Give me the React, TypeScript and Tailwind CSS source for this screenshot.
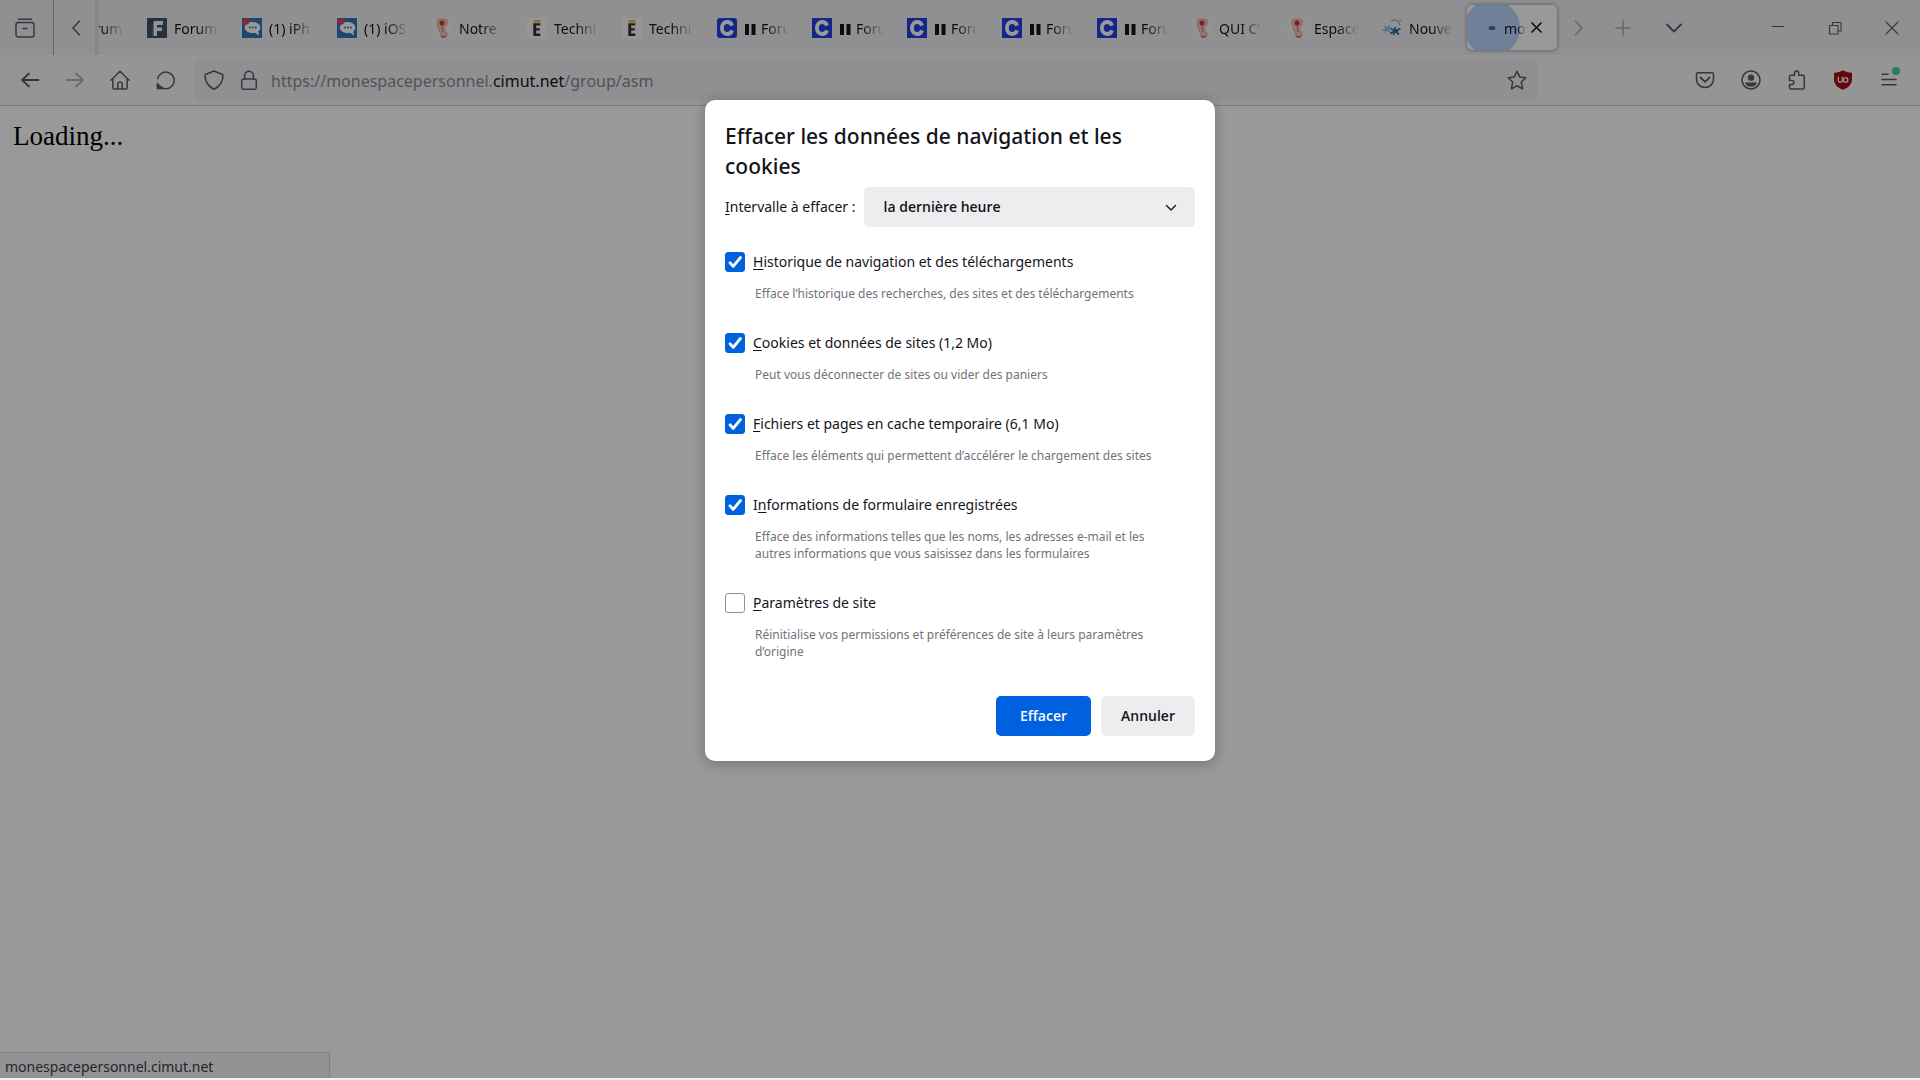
import { useState } from 'react'
import type { ReactNode } from 'react'
import clsx from 'clsx'

type Favicon = 'f' | 'chat' | 'red' | 'e' | 'cRound' | 'c' | 'stars'

const tabs: { icon: Favicon; title: string; paused?: boolean }[] = [
  { icon: 'f', title: 'Forum' },
  { icon: 'f', title: 'Forum' },
  { icon: 'chat', title: '(1) iPh' },
  { icon: 'chat', title: '(1) iOS' },
  { icon: 'red', title: 'Notre' },
  { icon: 'e', title: 'Techni' },
  { icon: 'e', title: 'Techni' },
  { icon: 'cRound', title: 'Foru', paused: true },
  { icon: 'c', title: 'Foru', paused: true },
  { icon: 'c', title: 'Foru', paused: true },
  { icon: 'c', title: 'Foru', paused: true },
  { icon: 'c', title: 'Foru', paused: true },
  { icon: 'red', title: 'QUI C’' },
  { icon: 'red', title: 'Espace' },
  { icon: 'stars', title: 'Nouve' },
]

const clearOptions = [
  {
    id: 'history',
    before: '',
    accessKey: 'H',
    after: 'istorique de navigation et des téléchargements',
    description: 'Efface l’historique des recherches, des sites et des téléchargements',
    checked: true,
  },
  {
    id: 'cookies',
    before: '',
    accessKey: 'C',
    after: 'ookies et données de sites (1,2 Mo)',
    description: 'Peut vous déconnecter de sites ou vider des paniers',
    checked: true,
  },
  {
    id: 'cache',
    before: '',
    accessKey: 'F',
    after: 'ichiers et pages en cache temporaire (6,1 Mo)',
    description: 'Efface les éléments qui permettent d’accélérer le chargement des sites',
    checked: true,
  },
  {
    id: 'forms',
    before: 'I',
    accessKey: 'n',
    after: 'formations de formulaire enregistrées',
    description:
      'Efface des informations telles que les noms, les adresses e-mail et les autres informations que vous saisissez dans les formulaires',
    checked: true,
  },
  {
    id: 'settings',
    before: '',
    accessKey: 'P',
    after: 'aramètres de site',
    description: 'Réinitialise vos permissions et préférences de site à leurs paramètres d’origine',
    checked: false,
  },
]

function Icon({ children, className, width = 1.5 }: { children: ReactNode; className?: string; width?: number }) {
  return (
    <svg
      viewBox="0 0 20 20"
      fill="none"
      stroke="currentColor"
      strokeWidth={width}
      strokeLinecap="round"
      strokeLinejoin="round"
      aria-hidden="true"
      className={clsx('shrink-0', className ?? 'size-5')}
    >
      {children}
    </svg>
  )
}

function TabFavicon({ icon }: { icon: Favicon }) {
  return (
    <svg viewBox="0 0 20 20" className="size-5 shrink-0" aria-hidden="true">
      {icon === 'f' && (
        <>
          <rect width="20" height="20" fill="#3f5366" />
          <path d="M6 3h10v4h-6v2.500h5v3.500h-5v5H5.500z" fill="#f4f6f8" />
          <path d="M2 3h4v15" fill="none" stroke="#31414f" strokeWidth="1" />
        </>
      )}
      {icon === 'chat' && (
        <>
          <rect width="20" height="20" fill="#3873bd" />
          <path
            d="M10.500 4C6 4 2.800 6.400 2.800 9.500s3.200 5.500 7.700 5.500c.9 0 1.700-.1 2.500-.3L17 17.500l-.6-4.200c1.200-1 1.900-2.300 1.900-3.800C18.300 6.400 15 4 10.500 4z"
            fill="#fff"
          />
          <g fill="#3873bd">
            <circle cx="8" cy="9.500" r="1" />
            <circle cx="10.900" cy="9.500" r="1" />
            <circle cx="13.800" cy="9.500" r="1" />
          </g>
          <circle cx="4" cy="3.600" r="3.200" fill="#fa3f3f" />
        </>
      )}
      {icon === 'red' && (
        <>
          <rect width="20" height="20" fill="#f6f3f2" />
          <path
            d="M6 1.300h7.500c1.500 0 1.900 1.500 1.700 3.700-.2 2.200-1.200 3.500-2.900 4.500l.2 3.500c2.200.3 3 2 2.600 3.500-.5 2-3.300 2.600-5.300 2-1.500-.4-1.500-1.800-.7-2.400-1.500-1.500-2.400-3.600-2.700-6.600C5 8 4.300 2.300 6 1.300z"
            fill="#f3c6be"
            stroke="#e08e85"
            strokeWidth=".7"
          />
          <path d="M10 7l.7 7" stroke="#dd7067" strokeWidth="1" />
          <circle cx="10" cy="5" r="2.500" fill="#c93630" />
          <path d="M9.500 18.500c1.800.7 3.600.5 4.800-.5" stroke="#e0564e" strokeWidth="1.400" fill="none" />
        </>
      )}
      {icon === 'e' && (
        <>
          <rect width="20" height="20" fill="#f9f8f6" />
          <rect x="6.800" y="2" width="6.700" height="2.500" fill="#f3b24a" />
          <path d="M6.300 5.300h7v2.300H9.200v2.600h3.600v2.200H9.200v3.100h4.100v2.400h-7z" fill="#33323a" />
        </>
      )}
      {(icon === 'c' || icon === 'cRound') && (
        <>
          <rect width="20" height="20" rx={icon === 'cRound' ? 3 : 0} fill="#2440e8" />
          <path
            d="M15 7.600C14.300 5.300 12.600 4 10.200 4 6.900 4 4.900 6.500 4.900 10s2 6 5.300 6c2.400 0 4.100-1.300 4.800-3.600"
            fill="none"
            stroke="#fff"
            strokeWidth="3.800"
          />
        </>
      )}
      {icon === 'stars' && (
        <>
          <path d="M9 3.200c4-2.500 8.500-1 9 4.300" fill="none" stroke="#5b96cc" strokeWidth="1" />
          <path d="M2.500 8l5.500 6M7.500 7.500l-4.500 7M.5 12.500l8-3" stroke="#7cc0e2" strokeWidth="1.500" />
          <path d="M8.500 10.500l7.500 3.500M13.500 9l-2 8M18.500 10.500L8 15.500M12.500 12.500l4.500 4" stroke="#276a9f" strokeWidth="1.700" />
          <circle cx="18.500" cy="2.800" r="1.300" fill="#f5c451" />
        </>
      )}
    </svg>
  )
}

function TabTitle({ children, className }: { children: ReactNode; className?: string }) {
  return (
    <span
      className={clsx(
        'flex min-w-0 flex-1 items-center gap-[5px] overflow-hidden pt-0.5 whitespace-nowrap mask-r-from-50% mask-r-to-100%',
        className,
      )}
    >
      {children}
    </span>
  )
}

function TabBar() {
  return (
    <div className="flex h-[55px] bg-[#f0f0f4] text-[#5b5b66]">
      <button aria-label="Firefox View" className="flex w-[54px] items-center justify-center border-r border-[#a8a8ae] pr-1">
        <Icon>
          <path d="M3.500 1.200h13" />
          <rect x="1" y="4.500" width="18" height="14.500" rx="2.300" />
          <path d="M8 10.500h4" />
        </Icon>
      </button>
      <button aria-label="Onglets précédents" className="flex w-[41px] items-center justify-center">
        <Icon>
          <path d="M14.500 3L8 10l6.500 7" />
        </Icon>
      </button>

      <div className="relative flex min-w-0 flex-1 items-center justify-end overflow-hidden text-sm text-[#15141a]">
        {tabs.map((tab, index) => (
          <button key={index} className="mr-[5px] flex h-[45px] w-[90px] shrink-0 items-center gap-[7px] pr-2 pl-2.5 text-left">
            <TabFavicon icon={tab.icon} />
            <TabTitle>
              {tab.paused && (
                <svg viewBox="0 0 12 12" className="size-3 shrink-0" fill="currentColor" aria-hidden="true">
                  <path d="M1 1h4v11H1zM7.500 1h4v11h-4z" />
                </svg>
              )}
              {tab.title}
            </TabTitle>
          </button>
        ))}
        <div className="relative mr-[5px] flex h-[45px] w-[90px] shrink-0 items-center overflow-hidden rounded-[5px] bg-white pr-3.5 pl-[37px] shadow-[0_0_4px_rgba(0,0,0,0.4)]">
          <svg viewBox="0 0 54 45" className="absolute top-0 left-0 h-[45px] w-[54px]" aria-hidden="true">
            <circle cx="25" cy="23" r="28" fill="#b9d8ff" />
            <ellipse cx="25" cy="23" rx="3.500" ry="2" fill="#56688a" />
          </svg>
          <TabTitle className="relative">mon</TabTitle>
          <button aria-label="Fermer l’onglet" className="relative flex w-4 shrink-0 justify-end">
            <Icon width={2.4} className="size-[13px]">
              <path d="M3 3l14 14M17 3L3 17" />
            </Icon>
          </button>
        </div>
        <div className="absolute inset-y-0 left-0 w-1 bg-linear-to-r from-[#dcdce0] to-[#e6e6ea]" />
      </div>

      <button aria-label="Onglets suivants" className="flex w-8 items-center justify-center text-[#a9a9b0]">
        <Icon>
          <path d="M7.500 3l6.500 7-6.500 7" />
        </Icon>
      </button>
      <button aria-label="Nouvel onglet" className="flex w-[58px] items-center justify-center text-[#a9a9b0]">
        <Icon>
          <path d="M10 3v14M3 10h14" />
        </Icon>
      </button>
      <button aria-label="Lister tous les onglets" className="mr-[53px] flex w-11 items-center justify-center">
        <Icon width={1.8}>
          <path d="M3 6.500l7 7 7-7" />
        </Icon>
      </button>
      <button aria-label="Réduire" className="flex w-[57px] items-center justify-center">
        <Icon width={1.1}>
          <path d="M4 8.500h12" />
        </Icon>
      </button>
      <button aria-label="Restaurer" className="flex w-[57px] items-center justify-center">
        <Icon width={1.1}>
          <path d="M4.500 7.500h8.500v8.500H4.500zM7.500 7.500V4.500H16V13h-3" />
        </Icon>
      </button>
      <button aria-label="Fermer" className="flex w-[57px] items-center justify-center">
        <Icon width={1.1}>
          <path d="M4 4l12 12M16 4L4 16" />
        </Icon>
      </button>
    </div>
  )
}

function ToolButton({ label, className, children }: { label: string; className: string; children: ReactNode }) {
  return (
    <button aria-label={label} className={clsx('relative flex h-10 shrink-0 items-center justify-center', className)}>
      {children}
    </button>
  )
}

function NavBar() {
  return (
    <div className="flex h-[51px] items-center border-b border-[#c9c9ce] bg-[#f9f9fb] pr-2 pl-[7px] text-[#5b5b66]">
      <ToolButton label="Page précédente" className="w-[45px]">
        <Icon width={1.8}>
          <path d="M18.500 10H2M9 3.500L2 10l7 6.500" />
        </Icon>
      </ToolButton>
      <ToolButton label="Page suivante" className="w-[45px] text-[#b5b5bb]">
        <Icon width={1.8}>
          <path d="M1.500 10H18M11 3.500l7 6.500-7 6.500" />
        </Icon>
      </ToolButton>
      <ToolButton label="Accueil" className="w-[45px]">
        <Icon>
          <path d="M1 10.200L10 1.200l9 9M2.800 8.800v8.700c0 .9.600 1.500 1.500 1.500h11.400c.9 0 1.500-.6 1.500-1.500V8.800M7.800 19v-5c0-1 .6-1.700 1.500-1.700h1.400c.9 0 1.500.7 1.500 1.700v5" />
        </Icon>
      </ToolButton>
      <ToolButton label="Actualiser" className="w-[45px]">
        <Icon>
          <path d="M2.700 8.700A8.300 8.300 0 1 1 5.300 16.600" />
          <path d="M2.300 13.600v5h5z" fill="currentColor" />
        </Icon>
      </ToolButton>

      <div className="mr-[145px] ml-[7px] flex h-10 flex-1 items-center rounded-[5px] bg-[#f0f0f4] px-2.5">
        <Icon className="mr-[15px] size-5">
          <path d="M10 1L18 4.200c.7.300 1 .7 1 1.400-.2 5.800-2.500 10.600-9 13.600C3.500 16.200 1.200 11.400 1 5.600c0-.7.3-1.100 1-1.400z" />
        </Icon>
        <Icon className="mr-3 size-5">
          <rect x="2.700" y="9" width="14.600" height="10.300" rx="2" />
          <path d="M5.600 9V5.600a4.400 4.400 0 0 1 8.800 0V9" />
        </Icon>
        <a href="#" className="flex-1 pt-0.5 text-base text-[#8a8a92]">
          https://monespacepersonnel.<span className="text-[#15141a]">cimut.net</span>/group/asm
        </a>
        <Icon>
          <path d="M10 1.200l2.700 5.700 6.100.8-4.500 4.300 1.200 6.200c.1.400-.2.600-.6.400L10 15.600l-4.900 3c-.4.200-.7 0-.6-.4L5.700 12 1.200 7.700l6.100-.8z" />
        </Icon>
      </div>

      <ToolButton label="Pocket" className="w-[46px]">
        <Icon>
          <path d="M3 2.800h14c.9 0 1.500.6 1.500 1.500v5c0 4.700-3.800 8.200-8.500 8.200S1.500 14 1.500 9.300v-5c0-.9.600-1.500 1.500-1.500z" />
          <path d="M5.500 7.500L10 11.800l4.500-4.300" strokeWidth="1.800" />
        </Icon>
      </ToolButton>
      <ToolButton label="Compte" className="w-[46px]">
        <Icon>
          <circle cx="10" cy="10" r="9" />
          <circle cx="10" cy="7.700" r="2.400" fill="currentColor" />
          <path d="M5 13.200h10c-.6 1.700-2.500 2.600-5 2.600s-4.400-.9-5-2.600z" fill="currentColor" />
        </Icon>
      </ToolButton>
      <ToolButton label="Extensions" className="w-[46px]">
        <Icon>
          <path d="M2.500 9V6.700c0-.9.500-1.400 1.400-1.400h3.600V3.200a2.100 2.100 0 0 1 4.200 0v2.100h4.200c.9 0 1.400.5 1.400 1.400v11c0 .9-.5 1.400-1.400 1.400h-12c-.9 0-1.400-.5-1.400-1.400v-3.200h2.300a2 2 0 0 0 0-4H2.500z" />
        </Icon>
      </ToolButton>
      <ToolButton label="uBlock Origin" className="w-[46px]">
        <svg viewBox="0 0 20 20" className="size-5" aria-hidden="true">
          <path d="M10 .3c2.600 1.600 5.600 2.400 9 2.500v6.600c0 4.700-3.700 8.200-9 10.400C4.700 17.600 1 14.100 1 9.400V2.800C4.400 2.700 7.400 1.900 10 .3z" fill="#a3101c" />
          <path d="M5.300 6.800v3.400a2 2 0 0 0 4 0V6.800" fill="none" stroke="#fff" strokeWidth="1.200" />
          <circle cx="12.600" cy="9.900" r="2.200" fill="none" stroke="#fff" strokeWidth="1.200" />
        </svg>
      </ToolButton>
      <ToolButton label="Menu de l’application" className="w-[46px]">
        <Icon>
          <path d="M3 4.300h6M3 9.500h14M3 14.700h14" />
        </Icon>
        <span className="absolute top-[7px] right-3 size-2 rounded-full bg-[#3ecfae]" />
      </ToolButton>
    </div>
  )
}

function ClearDataDialog() {
  const [checked, setChecked] = useState<Record<string, boolean>>(
    Object.fromEntries(clearOptions.map(option => [option.id, option.checked])),
  )

  return (
    <div
      role="dialog"
      aria-labelledby="dialog-title"
      className="w-[510px] rounded-[10px] bg-white px-5 pt-[21px] pb-[25px] text-sm text-[#15141a] shadow-[0_2px_14px_rgba(0,0,0,0.25)]"
    >
      <h1 id="dialog-title" className="pr-10 text-[21px] leading-[30px] font-medium">
        Effacer les données de navigation et les cookies
      </h1>

      <div className="mt-1.5 flex items-center gap-2">
        <label htmlFor="timespan" className="shrink-0">
          <span className="underline underline-offset-2">I</span>ntervalle à effacer :
        </label>
        <div className="relative flex-1">
          <select
            id="timespan"
            defaultValue="hour"
            className="h-10 w-full appearance-none rounded-[5px] bg-[#ededf0] px-5 font-['Open_Sans','Noto_Sans',sans-serif] font-semibold"
          >
            <option value="hour">la dernière heure</option>
            <option value="two">les deux dernières heures</option>
            <option value="all">tout</option>
          </select>
          <svg
            viewBox="0 0 12 12"
            fill="none"
            stroke="currentColor"
            strokeWidth="1.400"
            strokeLinecap="round"
            className="pointer-events-none absolute top-[15px] right-[18px] size-3"
            aria-hidden="true"
          >
            <path d="M1.500 3.500L6 8l4.500-4.500" />
          </svg>
        </div>
      </div>

      <div className="mt-[25px] space-y-[31px]">
        {clearOptions.map(option => (
          <div key={option.id}>
            <div className="flex h-5 items-center gap-2">
              <span className="relative flex size-5 shrink-0">
                <input
                  id={option.id}
                  type="checkbox"
                  checked={checked[option.id]}
                  onChange={e => setChecked({ ...checked, [option.id]: e.target.checked })}
                  className="size-5 appearance-none rounded-[3px] border border-[#8f8f9d] bg-white checked:border-[#0061e0] checked:bg-[#0061e0]"
                />
                {checked[option.id] && (
                  <svg
                    viewBox="0 0 20 20"
                    fill="none"
                    stroke="#fff"
                    strokeWidth="2.800"
                    strokeLinecap="round"
                    strokeLinejoin="round"
                    className="pointer-events-none absolute inset-0"
                    aria-hidden="true"
                  >
                    <path d="M5 10.800l3.200 3.600L15.500 5.500" />
                  </svg>
                )}
              </span>
              <label htmlFor={option.id}>
                {option.before}
                <span className="underline underline-offset-2">{option.accessKey}</span>
                {option.after}
              </label>
            </div>
            <p className="mt-[13px] pr-8 pl-[30px] text-xs leading-[17px] text-[#737279]">{option.description}</p>
          </div>
        ))}
      </div>

      <div className="mt-9 flex justify-end gap-2.5 font-['Open_Sans','Noto_Sans',sans-serif] font-semibold">
        <button className="h-10 w-[95px] rounded-[5px] bg-[#0061e0] text-[#fbfbfe]">Effacer</button>
        <button className="h-10 w-[94px] rounded-[5px] bg-[#ededf0]">Annuler</button>
      </div>
    </div>
  )
}

export default function App() {
  return (
    <div className="flex min-h-screen flex-col font-['Noto_Sans','Open_Sans',sans-serif]">
      <div className="relative flex flex-1 flex-col">
        <TabBar />
        <NavBar />
        <main className="flex-1 bg-white px-[13px] py-3.5 font-['Liberation_Serif',serif] text-[27px] leading-8 text-black">
          Loading...
        </main>
        <div className="absolute bottom-0 left-0 flex h-[26px] w-[330px] items-center border-t border-r border-[#d4d4d9] bg-[#f4f4f8] pt-0.5 pl-[5px] text-sm text-[#3e3e46]">
          monespacepersonnel.cimut.net
        </div>

        {/* Dimmed backdrop with the dialog on top */}
        <div className="absolute inset-0 flex items-start justify-center bg-black/40 pt-[100px]">
          <ClearDataDialog />
        </div>
      </div>
      {/* Top edge of the taskbar */}
      <div className="h-0.5 bg-[#f2f2f2]" />
    </div>
  )
}
